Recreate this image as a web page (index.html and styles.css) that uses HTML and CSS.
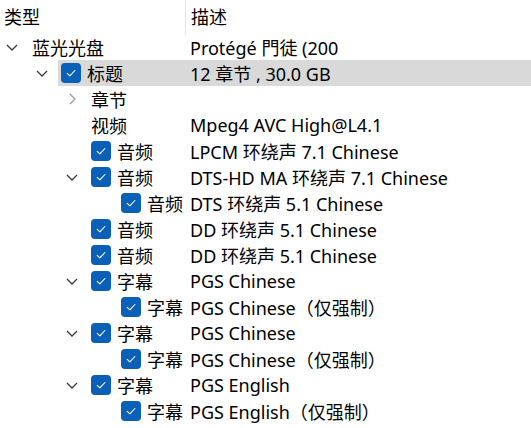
FILE: index.html
```html
<!DOCTYPE html>
<html lang="zh-CN">
<head>
<meta charset="utf-8">
<title>Tree</title>
<link rel="stylesheet" href="styles.css">
</head>
<body>
<div class="tree">
  <div class="header">
    <div class="hcell name-col">类型</div>
    <div class="hcell desc-col">描述</div>
  </div>

  <div class="row l0">
    <span class="chev down"><svg viewBox="0 0 12 7"><path d="M1 1l5 5 5-5"/></svg></span>
    <div class="item">
      <span class="name">蓝光光盘</span>
      <span class="desc">Protégé 門徒 (200</span>
    </div>
  </div>

  <div class="row l1">
    <span class="chev down"><svg viewBox="0 0 12 7"><path d="M1 1l5 5 5-5"/></svg></span>
    <div class="item selected">
      <span class="name"><span class="cb"><svg viewBox="0 0 20 20"><path d="M6.2 10.3l2.7 2.6 5-5.4"/></svg></span>标题</span>
      <span class="desc">12 章节 , 30.0 GB</span>
    </div>
  </div>

  <div class="row l2">
    <span class="chev right"><svg viewBox="0 0 7 12"><path d="M1 1l5 5-5 5"/></svg></span>
    <div class="item">
      <span class="name">章节</span>
      <span class="desc"></span>
    </div>
  </div>

  <div class="row l2">
    <span class="chev"></span>
    <div class="item">
      <span class="name">视频</span>
      <span class="desc">Mpeg4 AVC High@L4.1</span>
    </div>
  </div>

  <div class="row l2">
    <span class="chev"></span>
    <div class="item">
      <span class="name"><span class="cb"><svg viewBox="0 0 20 20"><path d="M6.2 10.3l2.7 2.6 5-5.4"/></svg></span>音频</span>
      <span class="desc">LPCM 环绕声 7.1 Chinese</span>
    </div>
  </div>

  <div class="row l2">
    <span class="chev down"><svg viewBox="0 0 12 7"><path d="M1 1l5 5 5-5"/></svg></span>
    <div class="item">
      <span class="name"><span class="cb"><svg viewBox="0 0 20 20"><path d="M6.2 10.3l2.7 2.6 5-5.4"/></svg></span>音频</span>
      <span class="desc">DTS-HD MA 环绕声 7.1 Chinese</span>
    </div>
  </div>

  <div class="row l3">
    <span class="chev"></span>
    <div class="item">
      <span class="name"><span class="cb"><svg viewBox="0 0 20 20"><path d="M6.2 10.3l2.7 2.6 5-5.4"/></svg></span>音频</span>
      <span class="desc">DTS 环绕声 5.1 Chinese</span>
    </div>
  </div>

  <div class="row l2">
    <span class="chev"></span>
    <div class="item">
      <span class="name"><span class="cb"><svg viewBox="0 0 20 20"><path d="M6.2 10.3l2.7 2.6 5-5.4"/></svg></span>音频</span>
      <span class="desc">DD 环绕声 5.1 Chinese</span>
    </div>
  </div>

  <div class="row l2">
    <span class="chev"></span>
    <div class="item">
      <span class="name"><span class="cb"><svg viewBox="0 0 20 20"><path d="M6.2 10.3l2.7 2.6 5-5.4"/></svg></span>音频</span>
      <span class="desc">DD 环绕声 5.1 Chinese</span>
    </div>
  </div>

  <div class="row l2">
    <span class="chev down"><svg viewBox="0 0 12 7"><path d="M1 1l5 5 5-5"/></svg></span>
    <div class="item">
      <span class="name"><span class="cb"><svg viewBox="0 0 20 20"><path d="M6.2 10.3l2.7 2.6 5-5.4"/></svg></span>字幕</span>
      <span class="desc">PGS Chinese</span>
    </div>
  </div>

  <div class="row l3">
    <span class="chev"></span>
    <div class="item">
      <span class="name"><span class="cb"><svg viewBox="0 0 20 20"><path d="M6.2 10.3l2.7 2.6 5-5.4"/></svg></span>字幕</span>
      <span class="desc">PGS Chinese<span class="paren">（仅强制）</span></span>
    </div>
  </div>

  <div class="row l2">
    <span class="chev down"><svg viewBox="0 0 12 7"><path d="M1 1l5 5 5-5"/></svg></span>
    <div class="item">
      <span class="name"><span class="cb"><svg viewBox="0 0 20 20"><path d="M6.2 10.3l2.7 2.6 5-5.4"/></svg></span>字幕</span>
      <span class="desc">PGS Chinese</span>
    </div>
  </div>

  <div class="row l3">
    <span class="chev"></span>
    <div class="item">
      <span class="name"><span class="cb"><svg viewBox="0 0 20 20"><path d="M6.2 10.3l2.7 2.6 5-5.4"/></svg></span>字幕</span>
      <span class="desc">PGS Chinese<span class="paren">（仅强制）</span></span>
    </div>
  </div>

  <div class="row l2">
    <span class="chev down"><svg viewBox="0 0 12 7"><path d="M1 1l5 5 5-5"/></svg></span>
    <div class="item">
      <span class="name"><span class="cb"><svg viewBox="0 0 20 20"><path d="M6.2 10.3l2.7 2.6 5-5.4"/></svg></span>字幕</span>
      <span class="desc">PGS English</span>
    </div>
  </div>

  <div class="row l3">
    <span class="chev"></span>
    <div class="item">
      <span class="name"><span class="cb"><svg viewBox="0 0 20 20"><path d="M6.2 10.3l2.7 2.6 5-5.4"/></svg></span>字幕</span>
      <span class="desc">PGS English<span class="paren">（仅强制）</span></span>
    </div>
  </div>
</div>
</body>
</html>
```

FILE: styles.css
```css
html, body {
  margin: 0;
  padding: 0;
  background: #ffffff;
}

body {
  font-family: "Noto Sans", "Noto Sans CJK SC", sans-serif;
  font-size: 18px;
  color: #000000;
  width: 531px;
  height: 428px;
  overflow: hidden;
}

.tree {
  display: flex;
  flex-direction: column;
}

.header {
  display: flex;
  height: 34px;
}

.hcell {
  display: flex;
  align-items: center;
  padding-bottom: 3px;
  box-sizing: border-box;
}

.header .name-col {
  width: 186px;
  padding-left: 4px;
  border-right: 1px solid #e5e5e5;
}

.header .desc-col {
  padding-left: 5px;
}

.row {
  display: flex;
  height: 26px;
  align-items: stretch;
}

.l0 { padding-left: 0; }
.l1 { padding-left: 30px; }
.l2 { padding-left: 60px; }
.l3 { padding-left: 90px; }

.chev {
  flex: 0 0 28px;
  display: flex;
  align-items: center;
  justify-content: center;
}

.chev.down svg {
  width: 12px;
  height: 7px;
  margin-left: -4px;
}

.chev.right svg {
  width: 7px;
  height: 12px;
  margin-left: -4px;
}

.chev svg path {
  fill: none;
  stroke-width: 1.3;
}

.chev.down svg path { stroke: #3a3a3a; }
.chev.right svg path { stroke: #9a9a9a; }

.item {
  flex: 1;
  display: flex;
  align-items: center;
  white-space: nowrap;
}

.item.selected {
  background: #d9d9d9;
}

.name {
  display: flex;
  align-items: center;
  padding-left: 3px;
  box-sizing: border-box;
}

.l0 .name { width: 162px; padding-left: 4px; }
.l1 .name { width: 132px; }
.l2 .name { width: 102px; }
.l3 .name { width: 72px; }

.cb {
  width: 20px;
  height: 20px;
  border-radius: 4px;
  background: #0a5fb6;
  margin-right: 6px;
  display: flex;
  flex: 0 0 20px;
}

.cb svg {
  width: 20px;
  height: 20px;
}

.cb svg path {
  fill: none;
  stroke: #ffffff;
  stroke-width: 1.1;
  stroke-linecap: round;
  stroke-linejoin: round;
}

.desc {
  padding-left: 0;
}

.paren {
  font-family: "Noto Sans CJK SC", sans-serif;
}
```
